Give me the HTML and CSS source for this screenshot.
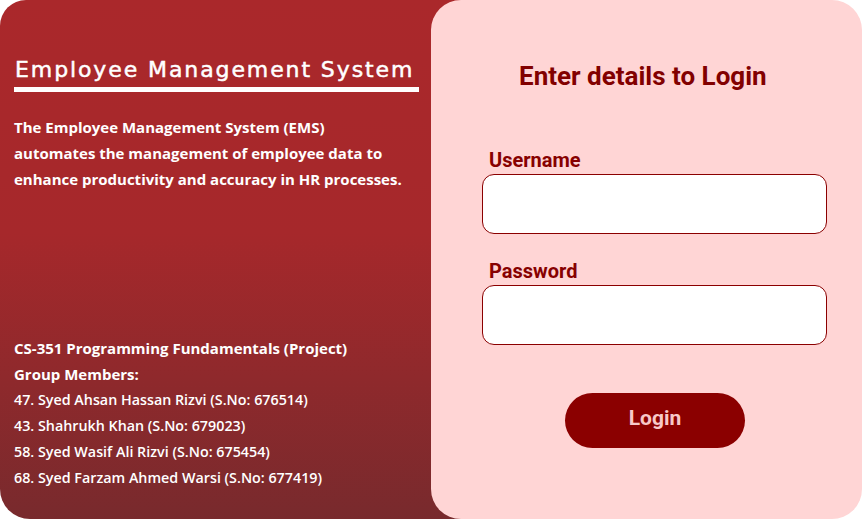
FILE: index.html
```html
<!DOCTYPE html>
<html>
<head>
<meta charset="utf-8">
<link rel="stylesheet" href="styles.css">
<title>EMS Login</title>
</head>
<body>
<div class="page">
  <section class="intro">
    <h1 class="title">Employee Management System</h1>
    <p class="about">The Employee Management System (EMS) automates the management of employee data to enhance productivity and accuracy in HR processes.</p>
    <div class="credits">
      <div class="strong">CS-351 Programming Fundamentals (Project)</div>
      <div class="strong">Group Members:</div>
      <div>47. Syed Ahsan Hassan Rizvi (S.No: 676514)</div>
      <div>43. Shahrukh Khan (S.No: 679023)</div>
      <div>58. Syed Wasif Ali Rizvi (S.No: 675454)</div>
      <div>68. Syed Farzam Ahmed Warsi (S.No: 677419)</div>
    </div>
  </section>
  <section class="login">
    <h2 class="heading">Enter details to Login</h2>
    <form class="form">
      <label class="label" for="u">Username</label>
      <input class="field" id="u" type="text">
      <label class="label second" for="p">Password</label>
      <input class="field" id="p" type="password">
      <button class="btn" type="button">Login</button>
    </form>
  </section>
</div>
</body>
</html>
```
FILE: styles.css
```css
* { box-sizing: border-box; }
html, body { margin: 0; padding: 0; background: #ffffff; }
.page {
  display: flex;
  width: 862px;
  height: 519px;
}
.intro {
  flex: 0 0 470px;
  margin-right: -39px;
  height: 519px;
  border-radius: 26px 0 0 30px;
  background: linear-gradient(to bottom, #aa282b 0%, #a6282b 45%, #782a2d 100%);
  color: #ffffff;
  padding: 55px 0 28px 14px;
  display: flex;
  flex-direction: column;
}
.title {
  margin: 0;
  width: 405px;
  font-family: "DejaVu Sans", sans-serif;
  font-weight: 400;
  font-size: 22px;
  letter-spacing: 1.9px;
  line-height: 30px;
  padding-left: 1px;
  white-space: nowrap;
  -webkit-text-stroke: 0.5px #ffffff;
  border-bottom: 5px solid #ffffff;
  padding-bottom: 2px;
}
.about {
  margin: 22px 0 0 0;
  width: 390px;
  font-family: "Open Sans", sans-serif;
  font-weight: 700;
  font-size: 15px;
  line-height: 26px;
}
.credits {
  margin-top: auto;
  font-family: "Open Sans", sans-serif;
  font-weight: 600;
  font-size: 14.3px;
  line-height: 26px;
}
.credits .strong { font-weight: 700; font-size: 15px; }
.login {
  flex: 0 0 431px;
  height: 519px;
  background: #ffd5d5;
  border-radius: 30px;
  padding: 59px 35px 0 51px;
}
.heading {
  margin: 0 0 0 37px;
  font-family: Roboto, sans-serif;
  font-weight: 700;
  font-size: 26px;
  line-height: 34px;
  color: #820000;
}
.form {
  display: flex;
  flex-direction: column;
  margin-top: 56px;
}
.label {
  font-family: Roboto, sans-serif;
  font-weight: 700;
  font-size: 20px;
  line-height: 22px;
  color: #870000;
  margin: 0 0 3px 7px;
}
.label.second { margin-top: 26px; }
.field {
  width: 345px;
  height: 60px;
  border: 1px solid #8b0000;
  border-radius: 12px;
  background: #ffffff;
  outline: none;
}
.btn {
  align-self: flex-start;
  margin: 48px 0 0 83px;
  width: 180px;
  height: 55px;
  border: none;
  border-radius: 28px;
  background: #8b0000;
  color: #f8c8c8;
  font-family: Roboto, sans-serif;
  font-weight: 700;
  font-size: 21px;
  padding: 0 0 5px 0;
}
```
